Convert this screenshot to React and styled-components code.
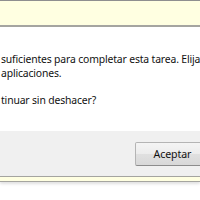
import React from 'react';
import styled, { createGlobalStyle } from 'styled-components';

const GlobalStyle = createGlobalStyle`
  html, body {
    margin: 0;
    padding: 0;
    background: #ffffff;
  }
  body {
    width: 200px;
    height: 200px;
    overflow: hidden;
  }
`;

const Window = styled.div`
  display: flex;
  flex-direction: column;
  width: 200px;
  height: 200px;
  overflow: hidden;
  background: #ffffff;
  font-family: 'Noto Sans', 'Open Sans', sans-serif;
  font-size: 10.4px;
  letter-spacing: -0.15px;
  color: #111111;
`;

const InfoBar = styled.div`
  height: 24px;
  flex: none;
  background: #ffffe1;
  border-top: 1px solid #8f8f8f;
  border-bottom: 2px solid #a5a5a0;
`;

const Body = styled.div`
  flex: none;
  height: 104px;
  padding-top: 25px;
  box-sizing: border-box;
  overflow: hidden;
`;

const Paragraph = styled.p`
  margin: 0 0 ${({ gap }) => gap || 0}px 0;
  padding-left: 1px;
  white-space: nowrap;
  line-height: 14px;
`;

const Footer = styled.div`
  flex: none;
  height: 45px;
  display: flex;
  justify-content: flex-end;
  align-items: flex-start;
  padding-top: 11px;
  box-sizing: border-box;
  background: #f0f0f0;
`;

const Button = styled.button`
  width: 75px;
  height: 24px;
  margin-right: -10px;
  padding: 0;
  box-sizing: border-box;
  border: 1px solid #b4b4b4;
  border-bottom-color: #8c8c8c;
  border-radius: 2px;
  background: linear-gradient(#f4f4f4 0%, #ececec 50%, #e0e0e0 51%, #d8d8d8 100%);
  font-family: inherit;
  font-size: 10.6px;
  letter-spacing: -0.1px;
  color: #111111;
`;

const Strip = styled.div`
  flex: none;
  height: 4px;
  background: #ffffe1;
  border-top: 1px solid #a5a5a0;
  border-bottom: 1px solid #a5a5a0;
  box-shadow: 0 2px 3px rgba(0, 0, 0, 0.12);
`;

export default function App() {
  return (
    <>
      <GlobalStyle />
      <Window>
        <InfoBar />
        <Body>
          <Paragraph>suficientes para completar esta tarea. Elija</Paragraph>
          <Paragraph gap={13}>aplicaciones.</Paragraph>
          <Paragraph>tinuar sin deshacer?</Paragraph>
        </Body>
        <Footer>
          <Button>Aceptar</Button>
        </Footer>
        <Strip />
      </Window>
    </>
  );
}
